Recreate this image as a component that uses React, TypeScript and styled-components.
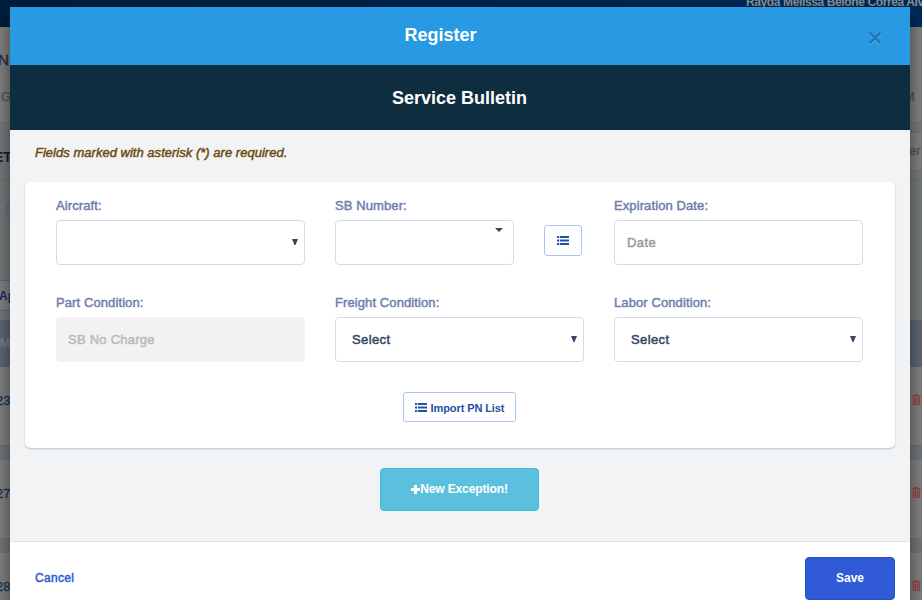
import React from "react";
import styled, { createGlobalStyle } from "styled-components";

const Global = createGlobalStyle`
  * { box-sizing: border-box; }
  body { margin: 0; overflow: hidden; font-family: "Liberation Sans", Arial, sans-serif; }
  button { font-family: inherit; margin: 0; padding: 0; }
`;

const Screen = styled.div`
  position: relative;
  width: 922px;
  height: 600px;
  overflow: hidden;
`;

const Page = styled.div`
  display: flex;
  flex-direction: column;
  width: 922px;
  height: 600px;
  background: #747879;
  white-space: nowrap;
`;

const Band = styled.div<{ $h: number; $bg: string; $line?: string }>`
  display: flex;
  justify-content: space-between;
  flex: none;
  height: ${(p) => p.$h}px;
  background: ${(p) => p.$bg};
  border-bottom: ${(p) => (p.$line ? `1px solid ${p.$line}` : "none")};
`;

const Edge = styled.div<{ $w?: number }>`
  width: ${(p) => p.$w ?? 10}px;
  flex: none;
`;

const PageText = styled.div<{ $top: number; $c: string; $size?: number; $bold?: boolean; $shift?: number }>`
  margin-top: ${(p) => p.$top}px;
  margin-left: ${(p) => p.$shift ?? 0}px;
  color: ${(p) => p.$c};
  font-size: ${(p) => p.$size ?? 13}px;
  line-height: 16px;
  font-weight: ${(p) => (p.$bold ? 700 : 400)};
  -webkit-text-stroke: ${(p) => (p.$bold ? 0 : 0.4)}px ${(p) => p.$c};
`;

const UserName = styled.div`
  width: 176px;
  margin-top: -6px;
  color: #8d949b;
  font-size: 12px;
  font-weight: 700;
  line-height: 16px;
  letter-spacing: -0.38px;
`;

const PageButton = styled.div`
  width: 30px;
  height: 31px;
  background: #7f7f7f;
  border: solid #526a8d;
  border-width: 1px 0;
`;

const PagePanel = styled.div`
  width: 13px;
  height: 39px;
  margin-top: 9px;
  background: #7f7f7f;
  border: solid #6b7178;
  border-width: 1px 0;
`;

const Pill = styled.div`
  width: 30px;
  height: 24px;
  margin: 17px 0 0 6px;
  border: 1px solid #526a8d;
  border-radius: 12px;
`;

const TrashWrap = styled.div`
  margin-top: 27px;
  line-height: 0;
`;

const Modal = styled.section`
  position: absolute;
  top: 7px;
  left: 10px;
  width: 900px;
  height: 600px;
  display: flex;
  flex-direction: column;
  background: #f1f3f5;
  box-shadow: 0 5px 15px rgba(0, 0, 0, 0.5);
`;

const TitleBar = styled.header`
  display: flex;
  justify-content: space-between;
  flex: none;
  height: 58px;
  background: #289ae3;
`;

const Heading = styled.h2`
  margin: 0;
  color: #fff;
  font-size: 18px;
  line-height: 22px;
  font-weight: 700;
  text-align: center;
`;

const TitleSlot = styled.div`
  width: 861px;
  padding-top: 17px;
`;

const Close = styled.button`
  flex: none;
  width: 16px;
  height: 16px;
  margin: 23px 27px 0 -20px;
  border: 0;
  background: none;
  line-height: 0;
`;

const SubBar = styled.div`
  flex: none;
  height: 65px;
  padding-top: 22px;
  padding-right: 1px;
  background: #0e2e40;
`;

const Body = styled.div`
  display: flex;
  flex-direction: column;
  align-items: center;
  flex: none;
  height: 411px;
`;

const Notice = styled.p`
  align-self: flex-start;
  margin: 15px 0 0 25px;
  color: #6d4a10;
  font-size: 13px;
  line-height: 16px;
  font-style: italic;
  letter-spacing: 0.02px;
  -webkit-text-stroke: 0.45px #6d4a10;
`;

const Card = styled.div`
  display: flex;
  flex-direction: column;
  align-items: center;
  flex: none;
  width: 870px;
  height: 266px;
  margin-top: 21px;
  padding: 15px 32px 0 31px;
  background: #fff;
  border-radius: 6px;
  box-shadow: 0 1px 2px rgba(150, 165, 200, 0.65);
`;

const Fields = styled.div`
  display: grid;
  grid-template-columns: repeat(3, 249px);
  column-gap: 30px;
  row-gap: 16px;
  width: 807px;
`;

const Field = styled.div`
  height: 81px;
`;

const Label = styled.label`
  display: block;
  height: 23px;
  padding-top: 1px;
  color: #6e7dab;
  font-size: 13px;
  line-height: 16px;
  letter-spacing: 0.1px;
  -webkit-text-stroke: 0.45px #6e7dab;
  white-space: nowrap;
`;

const Control = styled.div<{ $w?: number; $disabled?: boolean; $c?: string; $indent?: number; $spacing?: number }>`
  display: flex;
  justify-content: space-between;
  width: ${(p) => p.$w ?? 249}px;
  height: 45px;
  padding: 14px 6px 0 ${(p) => p.$indent ?? 12}px;
  color: ${(p) => p.$c ?? "#36455f"};
  background: ${(p) => (p.$disabled ? "#f2f2f2" : "#fff")};
  border: 1px solid ${(p) => (p.$disabled ? "#f2f2f2" : "#d3daea")};
  border-radius: 4px;
  font-size: 13px;
  line-height: 16px;
  letter-spacing: ${(p) => p.$spacing ?? 0.4}px;
  -webkit-text-stroke: 0.5px ${(p) => p.$c ?? "#36455f"};
`;

const ControlRow = styled.div`
  display: flex;
  gap: 30px;
`;

const Arrow = styled.svg<{ $top: number; $right?: number }>`
  flex: none;
  margin-top: ${(p) => p.$top}px;
  margin-right: ${(p) => p.$right ?? 0}px;
  margin-left: auto;
`;

const OutlineButton = styled.button<{ $w: number; $h: number; $top: number }>`
  display: flex;
  align-items: center;
  justify-content: center;
  gap: 4px;
  flex: none;
  width: ${(p) => p.$w}px;
  height: ${(p) => p.$h}px;
  margin-top: ${(p) => p.$top}px;
  color: #1f50a5;
  background: #fff;
  border: 1px solid #a9c5f4;
  border-radius: 3px;
  font-size: 11px;
  font-weight: 700;
  letter-spacing: -0.1px;
  line-height: 14px;
  white-space: nowrap;
`;

const ButtonText = styled.span<{ $down?: number }>`
  padding-top: ${(p) => p.$down ?? 0}px;
`;

const AddButton = styled.button`
  display: flex;
  align-items: center;
  justify-content: center;
  width: 159px;
  height: 43px;
  flex: none;
  margin-top: 20px;
  margin-right: 2px;
  padding: 0 0 1px 1px;
  color: #fff;
  background: #5bc0de;
  border: 1px solid #46b8da;
  border-radius: 4px;
  font-size: 12px;
  font-weight: 700;
  letter-spacing: -0.12px;
`;

const Footer = styled.footer`
  display: flex;
  justify-content: space-between;
  flex: 1;
  padding: 15px 15px 0 25px;
  background: #fff;
  border-top: 1px solid #e0e3e7;
`;

const Cancel = styled.button`
  align-self: flex-start;
  margin-top: 13px;
  color: #335bd5;
  background: none;
  border: 0;
  font-size: 12px;
  line-height: 16px;
  letter-spacing: 0.3px;
  -webkit-text-stroke: 0.5px #335bd5;
`;

const Save = styled.button`
  width: 90px;
  height: 43px;
  padding-bottom: 1px;
  color: #fff;
  background: #315bd6;
  border: 1px solid #2851c5;
  border-radius: 4px;
  font-size: 12px;
  font-weight: 700;
`;

const ListIcon = () => (
  <svg width="12" height="9" viewBox="0 0 12 9" fill="#1f50a5" stroke="none">
    <path d="M0 0h2.2v2H0zM0 3.5h2.2v2H0zM0 7h2.2v2H0zM3 0h9v2H3zM3 3.5h9v2H3zM3 7h9v2H3z" />
  </svg>
);

const Trash = () => (
  <TrashWrap>
    <svg width="9" height="11" viewBox="0 0 9 11" fill="none" stroke="#964545" strokeWidth="1.4">
      <path d="M0 1.9h9M3 1.5V.6h3v.9M1.6 2v8.3h5.8V2M3.5 3.5v5.5M5.5 3.5v5.5" />
    </svg>
  </TrashWrap>
);

const SelectArrow = () => (
  <Arrow $top={4} width="6" height="6" viewBox="0 0 6 6">
    <path d="M0 0h6L3.5 6h-1z" fill="#36455f" stroke="none" />
  </Arrow>
);

const RecordRow = ({ label, height }: { label: string; height: number }) => (
  <Band $h={height} $bg="#7f7f7f" $line="#66717c">
    <Edge><PageText $top={26} $c="#1b3554" $shift={-4}>{label}</PageText></Edge>
    <Edge><Trash /></Edge>
  </Band>
);

export default function App() {
  return (
    <Screen>
      <Global />
      <Page>
        <Band $h={27} $bg="linear-gradient(90deg, #001f3d, #002a5a)">
          <Edge />
          <UserName>Rayda Melissa Belone Correa Alves</UserName>
        </Band>
        <Band $h={96} $bg="#7f7f7f" $line="#6d7275">
          <Edge>
            <PageText $top={25} $c="#252c40" $size={15} $shift={-2}>N</PageText>
            <PageText $top={21} $c="#54585e" $shift={1}>G</PageText>
          </Edge>
          <Edge $w={18}><PageText $top={62} $c="#4e5157">M</PageText></Edge>
        </Band>
        <Band $h={57} $bg="#747879" $line="#666d70">
          <Edge><PageText $top={26} $c="#0e2538" $size={14} $bold $shift={-6}>ET</PageText></Edge>
          <Edge $w={13}><PagePanel><PageText $top={10} $c="#4e5157">er</PageText></PagePanel></Edge>
        </Band>
        <Band $h={100} $bg="#747879"><Edge><Pill /></Edge></Band>
        <Band $h={40} $bg="#747879">
          <Edge><PageButton><PageText $top={7} $c="#0f2c5c" $size={12} $bold $shift={-1}>Ap</PageText></PageButton></Edge>
        </Band>
        <Band $h={47} $bg="#5b6571">
          <Edge><PageText $top={15} $c="#7b8188" $size={12}>M</PageText></Edge>
        </Band>
        <RecordRow label="23" height={79} />
        <Band $h={14} $bg="#6e7578" />
        <RecordRow label="27" height={79} />
        <Band $h={14} $bg="#6e7578" />
        <RecordRow label="28" height={79} />
      </Page>
      <Modal>
        <TitleBar>
          <TitleSlot><Heading>Register</Heading></TitleSlot>
          <Close aria-label="Close">
            <svg width="16" height="16" viewBox="0 0 16 16" fill="none" strokeWidth="2.6">
              <path d="M2.5 3.5l11 11M13.5 3.5l-11 11" stroke="#57b1ea" />
              <path d="M2.5 2.5l11 11M13.5 2.5l-11 11" stroke="#207bb6" />
            </svg>
          </Close>
        </TitleBar>
        <SubBar><Heading>Service Bulletin</Heading></SubBar>
        <Body>
          <Notice>Fields marked with asterisk (*) are required.</Notice>
          <Card>
            <Fields>
              <Field><Label>Aircraft:</Label><Control><SelectArrow /></Control></Field>
              <Field>
                <Label>SB Number:</Label>
                <ControlRow>
                  <Control $w={179}>
                    <Arrow $top={-7} $right={4} width="8" height="4" viewBox="0 0 8 4"><path d="M0 0h8L4 4z" fill="#36455f" stroke="none" /></Arrow>
                  </Control>
                  <OutlineButton $w={38} $h={31} $top={5} aria-label="List"><ListIcon /></OutlineButton>
                </ControlRow>
              </Field>
              <Field><Label>Expiration Date:</Label><Control $c="#999b9e">Date</Control></Field>
              <Field><Label>Part Condition:</Label><Control $disabled $c="#b8babd" $indent={11} $spacing={0.25}>SB No Charge</Control></Field>
              <Field><Label>Freight Condition:</Label><Control $indent={16}>Select<SelectArrow /></Control></Field>
              <Field><Label>Labor Condition:</Label><Control $indent={16}>Select<SelectArrow /></Control></Field>
            </Fields>
            <OutlineButton $w={113} $h={30} $top={17}><ListIcon /><ButtonText $down={2}>Import PN List</ButtonText></OutlineButton>
          </Card>
          <AddButton>
            <svg width="9" height="9" viewBox="0 0 9 9"><path d="M3 0h3v3h3v3H6v3H3V6H0V3h3z" fill="#fff" stroke="none" /></svg>
            <ButtonText>New Exception!</ButtonText>
          </AddButton>
        </Body>
        <Footer>
          <Cancel>Cancel</Cancel>
          <Save>Save</Save>
        </Footer>
      </Modal>
    </Screen>
  );
}
